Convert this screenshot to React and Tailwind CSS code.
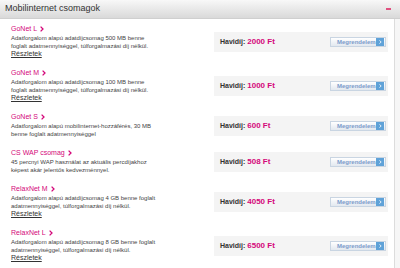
const packages = [
  {
    name: "GoNet L",
    desc: ["Adatforgalom alapú adatdíjcsomag 500 MB benne", "foglalt adatmennyiséggel, túlforgalmazási díj nélkül."],
    link: true,
    price: "2000 Ft",
  },
  {
    name: "GoNet M",
    desc: ["Adatforgalom alapú adatdíjcsomag 100 MB benne", "foglalt adatmennyiséggel, túlforgalmazási díj nélkül."],
    link: true,
    price: "1000 Ft",
  },
  {
    name: "GoNet S",
    desc: ["Adatforgalom alapú mobilinternet-hozzáférés, 30 MB", "benne foglalt adatmennyiséggel"],
    link: false,
    price: "600 Ft",
  },
  {
    name: "CS WAP csomag",
    desc: ["45 percnyi WAP használat az aktuális percdíjakhoz", "képest akár jelentős kedvezménnyel."],
    link: false,
    price: "508 Ft",
  },
  {
    name: "RelaxNet M",
    desc: ["Adatforgalom alapú adatdíjcsomag 4 GB benne foglalt", "adatmennyiséggel, túlforgalmazási díj nélkül."],
    link: true,
    price: "4050 Ft",
  },
  {
    name: "RelaxNet L",
    desc: ["Adatforgalom alapú adatdíjcsomag 8 GB benne foglalt", "adatmennyiséggel, túlforgalmazási díj nélkül."],
    link: true,
    price: "6500 Ft",
  },
];

const Chevron = ({ className }) => (
  <svg className={className} viewBox="0 0 4 6" width="4" height="6">
    <path d="M0.6 0.6 L3 3 L0.6 5.4" fill="none" stroke="currentColor" strokeWidth="1.3" />
  </svg>
);

const PackageRow = ({ pkg }) => (
  <div className="flex items-center pt-[5px] pb-[5px] pl-[11px]">
    <div className="w-[203px] shrink-0">
      <div className="flex items-center gap-[3px] h-[9px] text-[7px] leading-[9px] text-[#d4087a]">
        <span>{pkg.name}</span>
        <Chevron className="text-[#d4087a]" />
      </div>
      <div className="text-[6px] leading-[8px] text-[#444] mt-[1px]">
        {pkg.desc.map((line) => (
          <div key={line} className="whitespace-nowrap">
            {line}
          </div>
        ))}
      </div>
      {pkg.link && (
        <a href="#" className="block text-[7px] leading-[8px] text-[#333] underline">
          Részletek
        </a>
      )}
    </div>
    <div className="flex items-center justify-between w-[174px] h-[20px] bg-[#f4f4f4] pl-[6px] pr-[2px] mt-[1px]">
      <div className="text-[7px] font-bold text-[#333]">
        Havidíj: <span className="text-[#d4087a] text-[8px]">{pkg.price}</span>
      </div>
      <button className="flex items-center h-[10px] w-[56px] shrink-0 border border-[#c9d5e2] bg-gradient-to-b from-white to-[#e2e8ef] pl-[6px] pr-[1px]">
        <span className="text-[6px] font-bold text-[#7d9ccb] leading-none whitespace-nowrap">Megrendelem</span>
        <span className="ml-auto shrink-0 flex items-center justify-center w-[8px] h-[8px] bg-[#5fa2d8] text-white">
          <Chevron className="w-[3px] h-[4px]" />
        </span>
      </button>
    </div>
  </div>
);

export default function App() {
  return (
    <div className="w-[400px] h-[268px] overflow-hidden bg-[#f6f6f6] font-['Liberation_Sans',Arial,sans-serif]">
      <div className="flex items-center justify-between h-[19px] bg-gradient-to-b from-[#f8f8f8] to-[#d9d9d9] border-b border-[#cfcfcf] pl-[5px] pr-[9px]">
        <span className="text-[9px] text-[#333]">Mobilinternet csomagok</span>
        <span className="w-[5px] h-[2px] bg-[#e0507f]" />
      </div>
      <div className="w-[395px] bg-white border-r border-[#dcdcdc] h-[249px]">
        {packages.map((pkg) => (
          <PackageRow key={pkg.name} pkg={pkg} />
        ))}
      </div>
    </div>
  );
}
